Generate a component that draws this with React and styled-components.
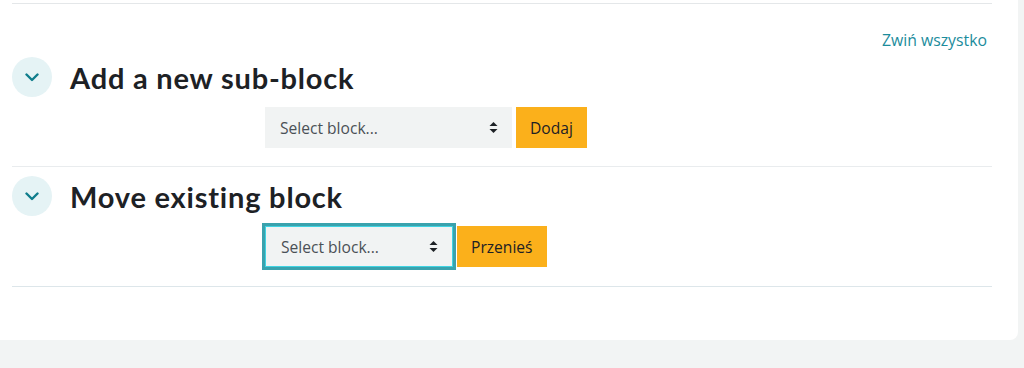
import React from 'react';
import styled, { createGlobalStyle } from 'styled-components';

const GlobalStyle = createGlobalStyle`
  html, body {
    margin: 0;
    padding: 0;
    background: #f2f4f4;
    font-family: "Open Sans", "Noto Sans", sans-serif;
    color: #1d2125;
  }
`;

const Page = styled.div`
  height: 368px;
  padding-right: 6px;
  box-sizing: border-box;
`;

const Card = styled.div`
  background: #fff;
  height: 340px;
  border-bottom-right-radius: 8px;
  padding: 3px 26px 0 12px;
  box-sizing: border-box;
`;

const Rule = styled.div`
  border-top: 1px solid ${({ $tone }) => $tone || '#e4e7e9'};
`;

const Toolbar = styled.div`
  display: flex;
  justify-content: flex-end;
  padding: 25px 5px 0 0;
  height: 22px;
  margin-bottom: 6px;
`;

const Link = styled.a`
  color: #1c8c9c;
  font-size: 15.8px;
  line-height: 22px;
  text-decoration: none;
`;

const Section = styled.div`
  padding-top: ${({ $top }) => $top}px;
  padding-bottom: ${({ $bottom }) => $bottom}px;
`;

const Header = styled.div`
  display: flex;
  align-items: center;
  gap: 18px;
  height: 40px;
`;

const Toggle = styled.span`
  width: 40px;
  height: 40px;
  border-radius: 50%;
  background: #e5f3f5;
  display: flex;
  align-items: center;
  justify-content: center;
  flex-shrink: 0;
`;

const Title = styled.h3`
  margin: 0;
  font-family: Lato, "Open Sans", sans-serif;
  font-size: 29px;
  font-weight: 700;
  letter-spacing: 0.8px;
  line-height: 1;
  color: #1d2125;
`;

const FormRow = styled.div`
  display: flex;
  align-items: center;
  gap: 4px;
  margin-top: 10px;
  padding-left: ${({ $indent }) => $indent}px;
  height: 41px;
`;

const Select = styled.div`
  width: ${({ $w }) => $w}px;
  height: 41px;
  box-sizing: border-box;
  background: #f1f3f3;
  display: flex;
  align-items: center;
  justify-content: space-between;
  padding: 0 14px 0 15px;
  font-size: 15.6px;
  color: #4a5056;
  border: ${({ $focused }) => ($focused ? '1px solid #40d3e2' : 'none')};
  box-shadow: ${({ $focused }) => ($focused ? '0 0 0 3px #3aa2ad' : 'none')};
`;

const Button = styled.button`
  height: 41px;
  border: none;
  background: #fbb01b;
  color: #1d2125;
  font-family: inherit;
  font-size: 15.6px;
  padding: 0 14px;
  cursor: pointer;
`;

const Chevron = () => (
  <svg width="14" height="9" viewBox="0 0 14 9" fill="none">
    <path d="M1.5 1.5 L7 7 L12.5 1.5" stroke="#0f7d8c" strokeWidth="2.4" strokeLinecap="round" strokeLinejoin="round" />
  </svg>
);

const Caret = () => (
  <svg width="9" height="13" viewBox="0 0 9 13">
    <path d="M4.5 1 L8.5 5 H0.5 Z" fill="#1d2125" />
    <path d="M4.5 12 L8.5 8 H0.5 Z" fill="#1d2125" />
  </svg>
);

function BlockSection({ title, selectWidth, focused, action, top, bottom, indent }) {
  return (
    <Section $top={top} $bottom={bottom}>
      <Header>
        <Toggle><Chevron /></Toggle>
        <Title>{title}</Title>
      </Header>
      <FormRow $indent={indent}>
        <Select $w={selectWidth} $focused={focused}>
          <span>Select block...</span>
          <Caret />
        </Select>
        <Button>{action}</Button>
      </FormRow>
    </Section>
  );
}

export default function App() {
  return (
    <Page>
      <GlobalStyle />
      <Card>
        <Rule />
        <Toolbar>
          <Link href="#">Zwiń wszystko</Link>
        </Toolbar>
        <BlockSection title="Add a new sub-block" selectWidth={247} action="Dodaj" top={0} bottom={18} indent={253} />
        <Rule $tone="#e9ecee" />
        <BlockSection title="Move existing block" selectWidth={188} focused action="Przenieś" top={9} bottom={19} indent={253} />
        <Rule $tone="#dde6ea" />
      </Card>
    </Page>
  );
}
